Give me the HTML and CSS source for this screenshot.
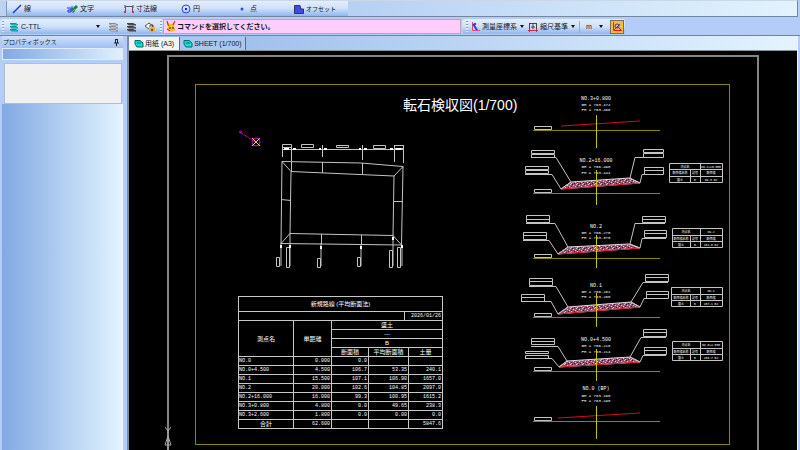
FILE: index.html
```
<!DOCTYPE html>
<html lang="ja">
<head>
<meta charset="utf-8">
<title>転石検収図</title>
<link rel="stylesheet" href="styles.css">
</head>
<body>
<div class="app">
  <div class="bar draw-bar">
    <div class="strip">
      <button class="tool w-line"><svg width="10" height="10"><path d="M1 9L9 1" stroke="#2233dd" stroke-width="1.500"/></svg>線</button>
      <button class="tool w-text"><svg width="11" height="10"><path d="M0 4H4V8H1V6H4M5 2V8H7V5H5" fill="none" stroke="#2233dd"/><path d="M5 7L10 2" stroke="#183" stroke-width="3"/><path d="M5 8L8 5" stroke="#7c2"/></svg>文字</button>
      <button class="tool w-dim"><svg width="10" height="10"><path d="M1.500 8V2.500H8.500V8M1 1V4M9 1V4" fill="none" stroke="#555"/><path d="M0 7h2v2H0zM8 7h2v2H8z" fill="#d33"/></svg>寸法線</button>
      <button class="tool w-circle"><svg width="10" height="10"><circle cx="5" cy="5" r="4" fill="none" stroke="#3344e0"/><path d="M4 4h2v2H4z" fill="#22d"/></svg>円</button>
      <button class="tool w-point"><svg width="10" height="10"><circle cx="5" cy="5" r="1.500" fill="#2a4ad8"/></svg>点</button>
      <button class="tool kana"><svg width="10" height="10"><path d="M.5 1.500H6L7 5H9.500V9.500H.5z" fill="#3d4ce8" stroke="#335"/></svg>オフセット</button>
    </div>
  </div>
  <div class="bar command-bar">
    <div class="strip layer-strip">
      <i class="grip"></i>
      <button class="tool layer"><svg width="10" height="10"><path d="M1 1.500H7L9 3H3zM1 4.500H7L9 6H3zM1 7.500H7L9 9H3z" fill="#19dcd5" stroke="#08959a"/></svg>C-TTL<b class="arrow push"></b></button>
      <button class="tool icon" aria-label="レイヤ"><svg width="11" height="10"><path d="M1 1.500H7L10 3H3zM1 4.500H7L10 6H3zM1 7.500H7L10 9H3z" fill="#fff" stroke="#888"/></svg></button>
      <button class="tool icon" aria-label="全レイヤ"><svg width="11" height="10"><path d="M1 1.500H7L10 3H3zM1 4.500H7L10 6H3zM1 7.500H7L10 9H3z" fill="#555" stroke="#444"/></svg></button>
      <button class="tool icon" aria-label="ロック"><svg width="11" height="10"><path d="M1 4L5 1L9 4L5 7z" fill="#fff" stroke="#555"/><path d="M6 5V3H9V5" fill="none" stroke="#543"/><path d="M5 5h6v5H5z" fill="#e8b52c"/><path d="M7 7h2v2H7z" fill="#554"/></svg></button>
      <i class="grip"></i>
    </div>
    <output class="message"><svg width="10" height="11"><path d="M1 0L4 3H6L9 0L8 6L10 9L6 11L1 9L2 6z" fill="#f0c21c"/><path d="M1 0L2.500 5M9 0L7 4M1 8L4 10" stroke="#c11"/><path d="M4 6v2M7 6v2" stroke="#311"/></svg>コマンドを選択してください。</output>
    <div class="strip right-strip">
      <i class="grip"></i>
      <button class="tool"><svg width="9" height="10"><path d="M1.500 0V8.500H9" fill="none" stroke="#e24b66"/><path d="M2 2L6 8M3 2H5" stroke="#2844e0" stroke-width="2"/></svg>測量座標系<b class="arrow"></b></button>
      <button class="tool"><svg width="10" height="10"><path d="M1.500 1V7.500M8.500 1V7.500M2 1.500H8M3 5H7M5 2V7" fill="none" stroke="#444"/><path d="M0 8.500H10M1.500 7V10M8.500 7V10" stroke="#d24"/></svg>縮尺基準<b class="arrow"></b></button>
      <i class="sep"></i>
      <button class="tool unit">m<b class="arrow"></b></button>
      <button class="tool snap" aria-label="座標スナップ"><svg width="10" height="10"><path d="M1.500 0V8.500H10M2 8L8 2" fill="none" stroke="#d22"/><circle cx="5" cy="4" r="2" fill="none" stroke="#33c"/><path d="M6 5L9 8" stroke="#33c"/></svg></button>
    </div>
  </div>
  <div class="work">
    <aside class="panel">
      <div class="panel-title kana"><span>プロパティボックス</span><svg width="7" height="8"><path d="M2 1.500H5M2.500 1V5M4.500 1V5M1 5H6M3.500 5V8" stroke="#223"/></svg></div>
      <div class="panel-band"></div>
      <div class="panel-box"></div>
      <div class="panel-rest"></div>
    </aside>
    <main class="view">
      <nav class="tabs">
        <button class="tab active"><svg width="10" height="9"><path d="M1 1.500H6L9 4V8H3L1 5z" fill="#19dcd5" stroke="#066a70"/><path d="M3 4H7" stroke="#066a70"/></svg>用紙 (A3)</button>
        <button class="tab"><svg width="10" height="9"><path d="M1 1.500H6L9 4V8H3L1 5z" fill="#19dcd5" stroke="#066a70"/><path d="M3 4H7" stroke="#066a70"/></svg>SHEET (1/700)</button>
      </nav>
      <div class="canvas">
        <svg class="drawing" width="100%" height="100%">
          <defs>
            <pattern id="rock" width="6" height="4" patternUnits="userSpaceOnUse">
              <rect width="6" height="4" fill="#96506f"/>
              <path d="M0 0h1v1H0zM3 1h1v1H3zM1 3h1v1H1zM5 2h1v1H5z" fill="#f0bcd8"/>
              <path d="M2 0h1v1H2zM4 3h1v1H4zM1 2h1v1H1z" fill="#3a1528"/>
            </pattern>
          </defs>
          <g transform="translate(-129 -51)">
            <path class="paper" d="M168 450V56H758V450"/>
            <rect class="olive" x="195.500" y="84.500" width="534" height="360"/>
            <path class="gray" d="M165 427L168 431L171 427M168 431V450M168 436L165 445H171z"/>
            <text class="heading" x="403" y="110">転石検収図<tspan class="scale">(1/700)</tspan></text>
            <g class="north"><path d="M240 132L255 142" stroke-dasharray="4 1"/><circle cx="240.500" cy="132" r="1"/><circle cx="256" cy="142" r="4"/><path class="star" d="M252 138L260 146M260 138L252 146"/></g>

            <g class="plan">
              <path d="M282 161.500L361 163L403 166.500L401.500 245L281 243.500zM291 171.500L394 176L393 235.500L290 233.500zM282 161.500L291 171.500M403 166.500L394 176M401.500 245L393 235.500M281 243.500L290 233.500"/>
              <path d="M322.500 162V173M362.500 163V174M321.500 234V244M361.500 235V245M281 199.500L291 200.500M394 201.500H403M291.500 162V171"/>
              <path d="M282 149.500H403M282.500 145V157M291.500 145V161M322.500 145V157M362.500 145V160M394.500 145V162M403.500 145V163"/>
              <path d="M282.500 144.500h9v3h-9zM301.500 144.500h12v3h-12zM336.500 145.500h12v2h-12zM373.500 145.500h12v3h-12zM394.500 145.500h9v3h-9z"/>
              <path d="M281 243V266M290 233V266M321 243V266M361 244V266M393 235V266M402 245V266"/>
              <path d="M276.500 257.500h3v9h-3zM286.500 247.500h3v20h-3zM317.500 258.500h3v9h-3zM357.500 257.500h3v9h-3zM389.500 250.500h3v17h-3zM397.500 247.500h3v20h-3z"/>
              <path class="dots" d="M284 148h5v2h-5zM293 148h3v2h-3zM319 148h2v2h-2zM324 148h3v2h-3zM359 148h2v2h-2zM364 148h3v2h-3zM390 148h3v2h-3zM396 148h5v2h-5zM280 245h2v3h-2zM289 245h2v3h-2zM320 246h2v3h-2zM360 246h2v3h-2zM392 237h2v3h-2zM401 245h2v3h-2z"/>
            </g>

            <g class="section">
              <text x="596" y="100">NO.3+0.800</text><text class="sm" x="596" y="106">GH = 763.474</text><text class="sm" x="596" y="111">FH = 763.466</text>
              <path class="ground" d="M561 126L640 121"/><path class="olive" d="M533 130.500H660"/><path class="axis" d="M596.500 115V148"/><path d="M534.500 126.500h17v3h-17z"/>
            </g>

            <g class="section">
              <path class="rock" d="M561 189L571 182L629 178L640 183z"/><path class="ground" d="M561 189L640 183"/>
              <text x="596" y="162">NO.2+16.000</text><text class="sm" x="596" y="168">GH = 766.490</text><text class="sm" x="596" y="174">FH = 763.444</text>
              <path class="olive" d="M533 193.500H660"/><path class="axis" d="M596.500 170V205"/><path d="M534.500 189.500h17v3h-17z"/>
              <path d="M531.500 150.500h23v3h-23zM531.500 154.500h23v3h-23zM525.500 166.500h23v3h-23zM525.500 170.500h23v3h-23zM643.500 149.500h20v3h-20zM643.500 153.500h20v4h-20zM644.500 167.500h19v3h-19zM644.500 170.500h19v4h-19z"/>
              <path d="M531 157.500H556L571 182M525 174.500H552L561 189L571 182M663 157.500H635L630 178M663 174.500H642L640 183L630 178"/>
              <path d="M669.500 163.500h53v19h-53zM669 169.500h53M669 176.500h53M690.500 170V182M700.500 163V182"/>
              <text class="xs" x="685" y="168">測点名</text><text class="xs" x="711" y="168">NO.2+16.000</text><text class="xs" x="680" y="174">断面積名称</text><text class="xs" x="695" y="174">記号</text><text class="xs" x="711" y="174">断面積</text><text class="xs" x="680" y="181">盛土</text><text class="xs" x="695" y="181">B</text><text class="xs" x="711" y="181">99.3 m2</text>
            </g>

            <g class="section">
              <path class="rock" d="M558 254L568 247L629 244L640 248z"/><path class="ground" d="M558 254L640 248"/>
              <text x="596" y="228">NO.2</text><text class="sm" x="596" y="234">GH = 766.270</text><text class="sm" x="596" y="239">FH = 763.370</text>
              <path class="olive" d="M533 258.500H660"/><path class="axis" d="M596.500 235V268"/><path d="M534.500 254.500h17v3h-17z"/>
              <path d="M526.500 215.500h23v4h-23zM526.500 219.500h23v3h-23zM523.500 232.500h23v3h-23zM523.500 235.500h23v4h-23zM642.500 216.500h23v3h-23zM642.500 219.500h23v3h-23zM644.500 230.500h22v3h-22zM644.500 233.500h22v4h-22z"/>
              <path d="M526 223.500H555L568 247M523 240.500H549L558 254L568 247M665 223.500H635L630 244M666 238.500H642L640 248L630 244"/>
              <path d="M672.500 228.500h50v19h-50zM672 235.500h50M672 241.500h50M690.500 235V247M700.500 228V247"/>
              <text class="xs" x="686" y="233">測点名</text><text class="xs" x="711" y="233">NO.2</text><text class="xs" x="681" y="240">断面積名称</text><text class="xs" x="695" y="240">記号</text><text class="xs" x="711" y="240">断面積</text><text class="xs" x="681" y="246">盛土</text><text class="xs" x="695" y="246">B</text><text class="xs" x="711" y="246">102.6 m2</text>
            </g>

            <g class="section">
              <path class="rock" d="M558 314L568 307L631 302L640 307z"/><path class="ground" d="M558 314L640 307"/>
              <text x="596" y="287">NO.1</text><text class="sm" x="596" y="293">GH = 766.261</text><text class="sm" x="596" y="298">FH = 763.260</text>
              <path class="olive" d="M533 317.500H660"/><path class="axis" d="M596.500 293V327"/><path d="M534.500 313.500h17v3h-17z"/>
              <path d="M529.500 278.500h23v3h-23zM529.500 281.500h23v4h-23zM521.500 294.500h23v3h-23zM521.500 297.500h23v4h-23zM645.500 274.500h23v3h-23zM645.500 277.500h23v4h-23zM646.500 291.500h22v3h-22zM646.500 294.500h22v4h-22z"/>
              <path d="M529 286.500H556L568 307M521 301.500H551L558 314L568 307M668 282.500H643L631 302M668 298.500H644L640 307L631 302"/>
              <path d="M671.500 287.500h51v19h-51zM671 294.500h51M671 300.500h51M690.500 294V306M700.500 287V306"/>
              <text class="xs" x="686" y="292">測点名</text><text class="xs" x="711" y="292">NO.1</text><text class="xs" x="681" y="299">断面積名称</text><text class="xs" x="695" y="299">記号</text><text class="xs" x="711" y="299">断面積</text><text class="xs" x="681" y="305">盛土</text><text class="xs" x="695" y="305">B</text><text class="xs" x="711" y="305">107.1 m2</text>
            </g>

            <g class="section">
              <path class="rock" d="M559 367L567 361L630 357L640 362z"/><path class="ground" d="M559 367L640 362"/>
              <text x="596" y="341">NO.0+4.500</text><text class="sm" x="596" y="347">GH = 766.216</text><text class="sm" x="596" y="353">FH = 763.214</text>
              <path class="olive" d="M533 371.500H660"/><path class="axis" d="M596.500 349V381"/><path d="M534.500 367.500h17v3h-17z"/>
              <path d="M531.500 338.500h23v3h-23zM531.500 341.500h23v3h-23zM525.500 351.500h23v2h-23zM525.500 355.500h23v3h-23zM643.500 329.500h23v3h-23zM643.500 332.500h23v4h-23zM644.500 347.500h22v3h-22zM644.500 350.500h22v4h-22z"/>
              <path d="M531 346.500H558L567 361M525 358.500H552L559 367L567 361M666 337.500H641L630 357M666 355.500H643L640 362L630 357"/>
              <path d="M672.500 341.500h50v19h-50zM672 348.500h50M672 354.500h50M690.500 348V360M700.500 341V360"/>
              <text class="xs" x="686" y="346">測点名</text><text class="xs" x="711" y="346">NO.0+4.500</text><text class="xs" x="681" y="353">断面積名称</text><text class="xs" x="695" y="353">記号</text><text class="xs" x="711" y="353">断面積</text><text class="xs" x="681" y="359">盛土</text><text class="xs" x="695" y="359">B</text><text class="xs" x="711" y="359">106.7 m2</text>
            </g>

            <g class="section">
              <text x="596" y="390">NO.0 (BP)</text><text class="sm" x="596" y="397">GH = 763.190</text><text class="sm" x="596" y="402">FH = 763.190</text>
              <path class="ground" d="M558 418L640 413"/><path class="olive" d="M533 421.500H660"/><path class="axis" d="M596.500 406V439"/><path d="M534.500 417.500h17v3h-17z"/>
            </g>
          </g>
        </svg>
        <table class="volume">
          <colgroup><col class="c1"><col class="c2"><col class="c3"><col class="c4"><col class="c5"><col class="c6"></colgroup>
          <thead>
            <tr class="caption"><th colspan="6">新規路線 (平均断面法)</th></tr>
            <tr><td colspan="4"></td><td colspan="2">2026/01/26</td></tr>
            <tr><th rowspan="4">測点名</th><th rowspan="4">単距離</th><th colspan="4">盛土</th></tr>
            <tr><th colspan="4">---</th></tr>
            <tr><th colspan="4">B</th></tr>
            <tr><th>断面積</th><th colspan="2">平均断面積</th><th>土量</th></tr>
          </thead>
          <tbody>
            <tr><td>NO.0</td><td>0.000</td><td>0.0</td><td colspan="2"></td><td></td></tr>
            <tr><td>NO.0+4.500</td><td>4.500</td><td>106.7</td><td colspan="2">53.35</td><td>240.1</td></tr>
            <tr><td>NO.1</td><td>15.500</td><td>107.1</td><td colspan="2">106.90</td><td>1657.0</td></tr>
            <tr><td>NO.2</td><td>20.000</td><td>102.6</td><td colspan="2">104.85</td><td>2097.0</td></tr>
            <tr><td>NO.2+16.000</td><td>16.000</td><td>99.3</td><td colspan="2">100.95</td><td>1615.2</td></tr>
            <tr><td>NO.3+0.800</td><td>4.800</td><td>0.0</td><td colspan="2">49.65</td><td>238.3</td></tr>
            <tr><td>NO.3+2.600</td><td>1.800</td><td>0.0</td><td colspan="2">0.00</td><td>0.0</td></tr>
            <tr><th>合計</th><td>62.600</td><td></td><td colspan="2"></td><td>5847.6</td></tr>
          </tbody>
        </table>
      </div>
    </main>
  </div>
</div>
</body>
</html>
```
FILE: styles.css
```
* { box-sizing: border-box; }
body {
  margin: 0;
  overflow: hidden;
  font: 7px/12px "Liberation Sans", "Noto Sans CJK JP", sans-serif;
  color: #101820;
}
svg { flex: none; display: block; }
button { border: 0; padding: 0; margin: 0; background: none; font: inherit; color: inherit; }
.kana { font-size: 6px; }
.app { display: flex; flex-direction: column; height: 100vh; background: #b4cdf8; }

.bar { display: flex; flex: none; }
.draw-bar {
  height: 17px;
  margin-right: 2px;
  padding-left: 6px;
  border-top: 1px solid #cdd6e4;
  border-right: 1px solid #75869f;
  border-bottom: 1px solid #75869f;
  background: linear-gradient(90deg, #bcd2f3, #b7d1f3 45%, #e2f3fd);
}
.strip { display: flex; align-items: center; background: linear-gradient(#e3eefd, #cfe0fa 50%, #8fb6ee); }
.draw-bar .strip { width: 342px; padding-left: 5px; border-left: 1px solid #8097bb; }
.tool { display: flex; align-items: center; gap: 2px; white-space: nowrap; }
.w-line { width: 55px; }
.w-text { width: 57px; }
.w-dim { width: 57px; }
.w-circle { width: 56px; }
.w-point { width: 57px; gap: 3px; }

.command-bar { height: 19px; padding: 2px 0 1px; border-bottom: 1px solid #758298; }
.layer-strip { width: 163px; gap: 5px; padding: 0 1px 0 2px; border-radius: 3px; }
.layer { flex: 1; }
.icon { width: 13px; justify-content: flex-end; }
.grip { width: 2px; height: 11px; background: repeating-linear-gradient(#7d9cce 0 1px, #e7f1ff 1px 3px); }
.sep { width: 1px; height: 12px; background: #8eace0; }
.arrow { border: 2px solid transparent; border-top: 3px solid #111; border-bottom: 0; margin: 0 1px; }
.push { margin-left: auto; }
.message {
  display: flex;
  align-items: center;
  flex: 0 1 298px;
  gap: 1px;
  padding-left: 2px;
  border: 1px solid #bca2bd;
  background: #ffcdfb;
  font-weight: bold;
  white-space: nowrap;
}
.right-strip { gap: 3px; padding: 0 1px 0 4px; margin-left: 1px; border-radius: 3px; }
.unit { gap: 6px; padding: 0 3px; }
.snap { padding: 1px; border: 1px solid #7c6a55; background: #f5b94c; }

.work { display: flex; flex: 1; min-height: 0; }
.panel { display: flex; flex-direction: column; flex: none; width: 123px; padding-left: 2px; }
.panel-title { display: flex; align-items: center; justify-content: space-between; height: 12px; padding: 0 3px 0 1px; background: linear-gradient(#cfe1fb, #9fbff0); }
.panel-band { height: 12px; border: 1px solid #dfeafa; background: linear-gradient(90deg, #82a9e3, #e0f0fd); }
.panel-box { height: 41px; margin: 3px 1px 0 2px; border: 1px solid #b6bcc8; background: #f0f0f0; }
.panel-rest { flex: 1; border-right: 1px solid #f0f8ff; background: linear-gradient(90deg, #82a9e3, #e2f3fe); }
.view { display: flex; flex-direction: column; flex: 1; min-width: 0; margin: 0 2px 0 4px; border-left: 2px solid #7f8a9b; border-right: 1px solid #f2f7fc; }
.tabs { display: flex; flex: none; height: 15px; padding-top: 1px; background: linear-gradient(90deg, #93b5e9, #e3f4fe); border-bottom: 1px solid #8d9299; }
.tab { display: flex; align-items: center; gap: 1px; padding: 0 3px; border-right: 1px solid #5c6b82; background: #a9c7ef; white-space: nowrap; }
.tab.active { padding: 0 5px; background: #f3f5f5; }
.canvas { position: relative; flex: 1; overflow: hidden; background: #000; }

.drawing { position: absolute; inset: 0; fill: none; stroke: none; }
.drawing .paper { stroke: #858585; stroke-width: 2px; }
.drawing .olive { stroke: #868600; }
.drawing .gray { stroke: #aaa; }
.drawing .axis { stroke: #c6c600; }
.drawing .rock { fill: url(#rock); stroke: #ddd; }
.drawing .ground { stroke: #d10d22; }
.plan, .section { stroke: #c4c4c4; }
.plan .dots { fill: #fff; stroke: none; }
.north { stroke: #d000d0; }
.north .star { stroke: #e0e020; }
.drawing text { fill: #fff; stroke: none; font-family: "Liberation Mono", "Noto Sans CJK JP", monospace; font-size: 5px; text-anchor: middle; }
.drawing text.heading { font-family: "Noto Sans CJK JP", sans-serif; font-size: 14px; text-anchor: start; }
.drawing .scale { font-family: "Liberation Sans", sans-serif; }
.drawing text.sm { font-size: 4px; }
.drawing text.xs { font-size: 3px; }

.volume {
  position: absolute;
  left: 109px;
  top: 245px;
  width: 204px;
  table-layout: fixed;
  border-collapse: collapse;
  color: #fff;
  font: 5px/8px "Liberation Mono", "Noto Sans CJK JP", monospace;
}
.volume th, .volume td { height: 9px; padding: 0 1px; border: 1px solid #c8c8c8; white-space: nowrap; text-align: right; overflow: hidden; }
.volume th { font-family: "Liberation Sans", "Noto Sans CJK JP", sans-serif; font-size: 6px; font-weight: normal; text-align: center; padding: 0; }
.volume .caption th { height: 15px; }
.volume td:first-child { text-align: left; padding: 0; }
.c1 { width: 55px; }
.c2 { width: 38px; }
.c3 { width: 37px; }
.c4 { width: 36px; }
.c5 { width: 4px; }
.c6 { width: 34px; }
```
